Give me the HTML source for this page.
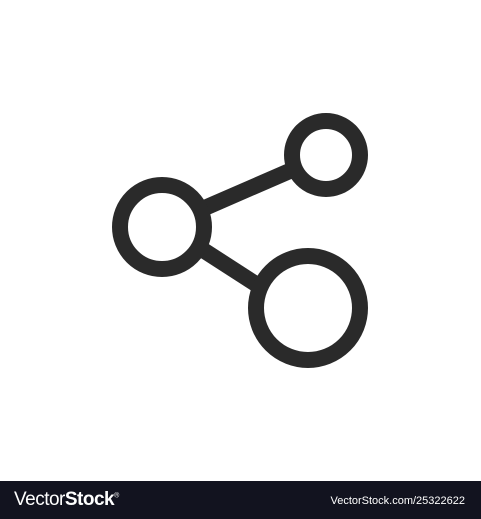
<!DOCTYPE html>
<html><head><style>
body{margin:0;width:481px;height:519px;background:#fff;overflow:hidden;position:relative;font-family:"Liberation Sans",sans-serif}
.bar{position:absolute;left:0;top:481px;width:481px;height:38px;background:#12131f;color:#fff}
.l{position:absolute;left:14px;top:8px;font-size:19px;letter-spacing:-0.5px}
.r{position:absolute;right:16px;top:14px;font-size:11px}
</style></head><body>
<svg width="481" height="481" style="position:absolute;left:0;top:0">
<g fill="none" stroke="#2a2a2a" stroke-width="16">
<line x1="200" y1="210" x2="292" y2="170"/>
<line x1="200" y1="248" x2="262" y2="288"/>
<circle cx="326" cy="155" r="34"/>
<circle cx="162" cy="227" r="42"/>
<circle cx="308" cy="308" r="52"/>
</g></svg>
<div class="bar"><div class="l">Vector<b>Stock</b><sup style="font-size:7px">®</sup></div><div class="r">VectorStock.com/25322622</div></div>
</body></html>
